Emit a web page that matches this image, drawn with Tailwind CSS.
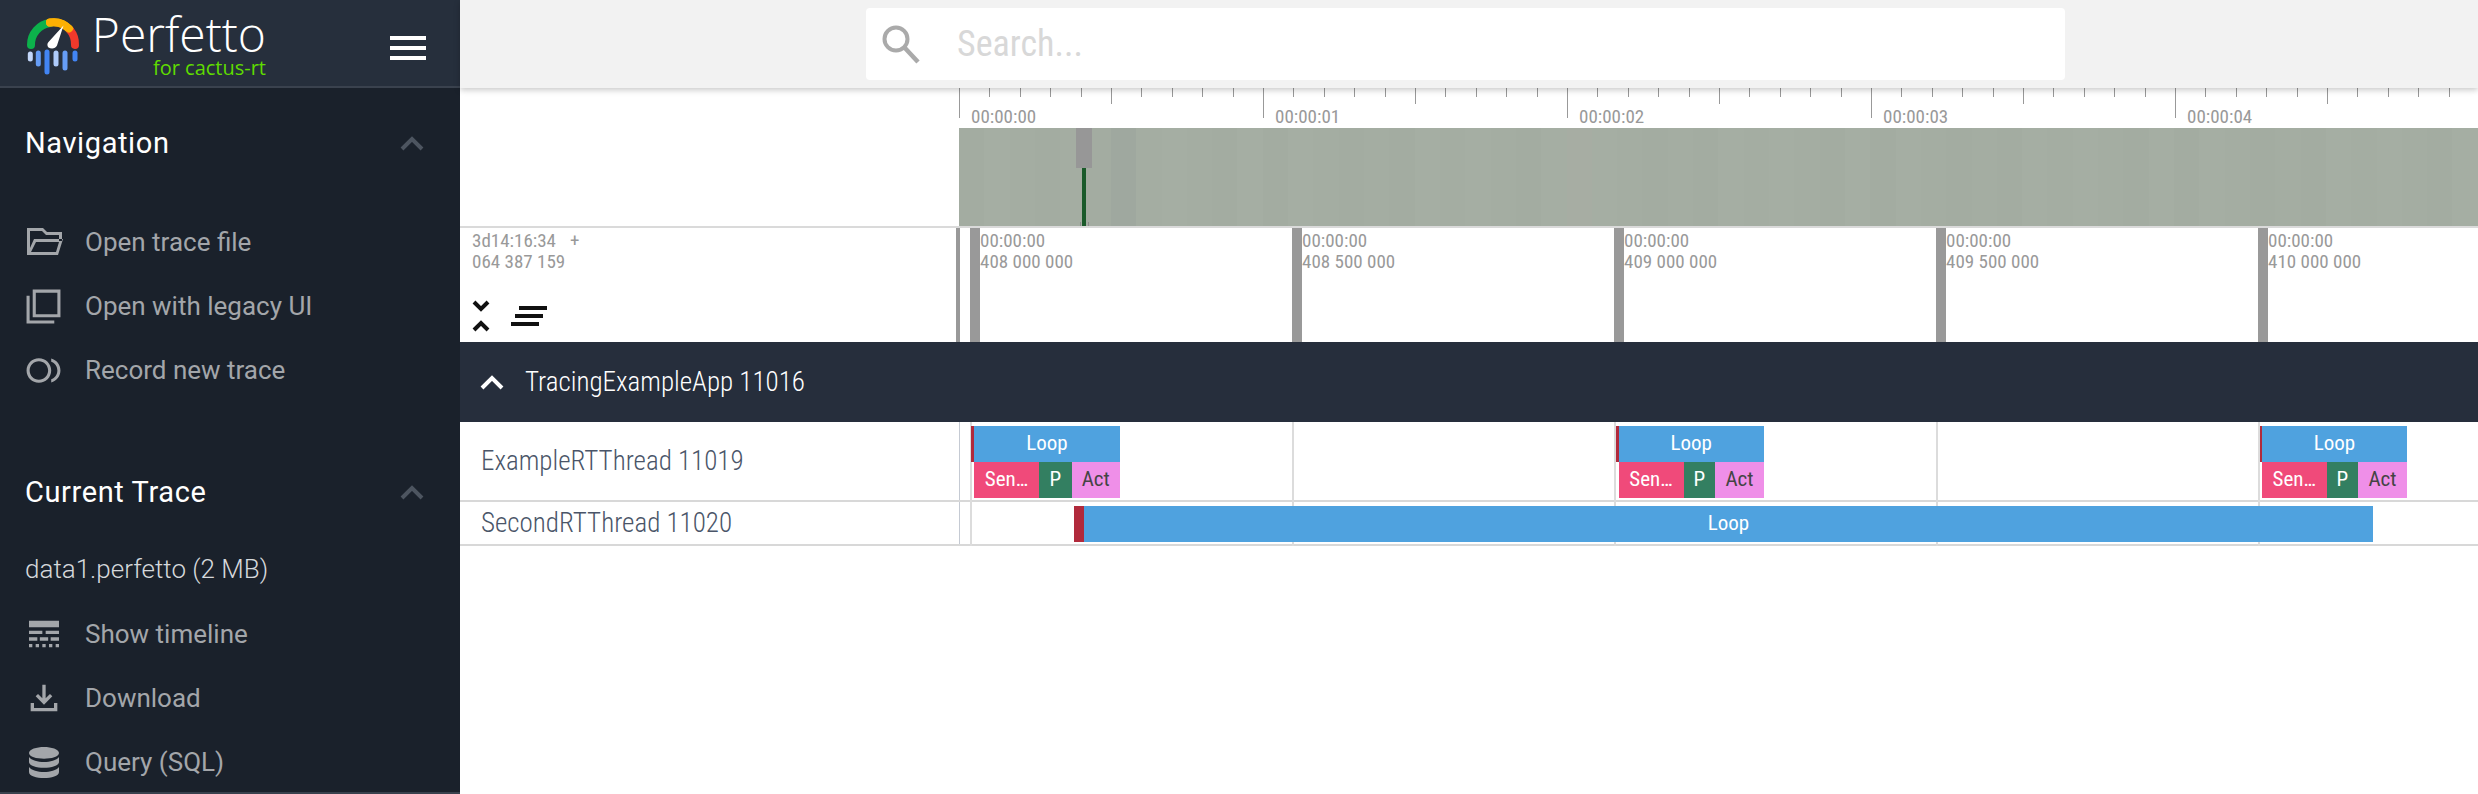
<!DOCTYPE html>
<html lang="en">
<head>
  <meta charset="UTF-8" />
  <meta name="viewport" content="width=device-width, initial-scale=1.0" />
  <title>Perfetto UI</title>
  <script src="https://cdn.jsdelivr.net/npm/@tailwindcss/browser@4"></script>
</head>
<body class="flex h-[794px] w-[2478px] overflow-hidden bg-white font-['Roboto',sans-serif]">

  <!-- Sidebar -->
  <aside class="flex h-full w-[460px] flex-none flex-col overflow-hidden border-b-2 border-[#39414d] bg-[#1a212b]">
    <div class="flex h-[88px] flex-none items-start justify-between border-b-2 border-[#3a424e] bg-[#262f3c] pr-[34px]">
      <div class="flex">
        <svg class="mt-[16px] ml-[26px] h-[62px] w-[56px] flex-none" viewBox="0 0 56 62" fill="none">
          <g stroke-width="8" stroke-linecap="round">
            <path d="M5 29A22 22 0 0 1 24 7" stroke="#0cb14b" />
            <path d="M24 6.5A22 22 0 0 1 44 14" stroke="#fbb003" />
            <path d="M44 14A22 22 0 0 1 49 29" stroke="#f1392b" />
            <path d="M24 6.5A22 22 0 0 1 43 12.5" stroke="#fbb003" />
          </g>
          <path d="M37.5 9.5L31 29.5C29.5 33 25 33 22.5 31.5C21 30 21 27.5 22.5 26Z" fill="#fff" />
          <g stroke-width="5" stroke-linecap="round">
            <path d="M4.3 38V43" stroke="#c3d7fa" />
            <path d="M12.3 37V48" stroke="#669df6" />
            <path d="M21 36V56" stroke="#4285f4" />
            <path d="M30 37V48" stroke="#aecbfa" />
            <path d="M39 37V52" stroke="#669df6" />
            <path d="M49 37V43" stroke="#4285f4" />
          </g>
        </svg>
        <div class="ml-[14px] flex w-[170px] flex-col items-end font-['Open_Sans',sans-serif]">
          <span class="mt-[4px] h-[52px] text-[48px] leading-[60px] font-light text-white">Perfetto</span>
          <span class="mt-[0px] text-[20px] leading-[24px] text-[#5fdc00]">for cactus-rt</span>
        </div>
      </div>
      <button class="mt-[36px] flex h-[24px] w-[36px] flex-col justify-between">
        <span class="h-[4px] w-full bg-white"></span>
        <span class="h-[4px] w-full bg-white"></span>
        <span class="h-[4px] w-full bg-white"></span>
      </button>
    </div>

    <section class="pt-[36px]">
      <div class="flex h-[38px] items-center justify-between pr-[36px] pl-[25px]">
        <h2 class="text-[29px] leading-[38px] tracking-[0.6px] text-white">Navigation</h2>
        <svg class="h-[16px] w-[24px]" viewBox="0 0 24 16" fill="none"><path d="M2 14L12 4L22 14" stroke="#4d5560" stroke-width="4" /></svg>
      </div>
      <ul class="mt-[48px] flex flex-col text-[26px] text-[#a3a6aa]">
        <li class="flex h-[64px] items-center">
          <svg class="ml-[27px] h-[28px] w-[36px]" viewBox="0 0 36 28" fill="currentColor"><path fill-rule="evenodd" d="M0 0H16L20 4H35V13H32V7H19L15 3H3V20L7 11H36L31 27H0ZM9 14L4 24H29L32 14Z" /></svg>
          <span class="ml-[22px]">Open trace file</span>
        </li>
        <li class="flex h-[64px] items-center">
          <svg class="ml-[25px] h-[37px] w-[37px]" viewBox="0 0 24 24" fill="currentColor"><path d="M3 5H1v18h18v-2H3V5zm20-4H5v18h18V1zm-2 16H7V3h14v14z" /></svg>
          <span class="ml-[23px]">Open with legacy UI</span>
        </li>
        <li class="flex h-[64px] items-center">
          <svg class="ml-[25px] h-[37px] w-[37px]" viewBox="0 0 24 24" fill="currentColor"><path d="M17 4.26v2.09c2.33.82 4 3.04 4 5.65s-1.67 4.83-4 5.65v2.09c3.45-.89 6-4.01 6-7.74s-2.55-6.85-6-7.74zM9 4c-4.42 0-8 3.58-8 8s3.58 8 8 8 8-3.58 8-8-3.58-8-8-8zm0 14c-3.31 0-6-2.69-6-6s2.69-6 6-6 6 2.69 6 6-2.69 6-6 6z" /></svg>
          <span class="ml-[23px]">Record new trace</span>
        </li>
      </ul>
    </section>

    <section class="pt-[71px]">
      <div class="flex h-[38px] items-center justify-between pr-[36px] pl-[25px]">
        <h2 class="text-[29px] leading-[38px] tracking-[0.6px] text-white">Current Trace</h2>
        <svg class="h-[16px] w-[24px]" viewBox="0 0 24 16" fill="none"><path d="M2 14L12 4L22 14" stroke="#4d5560" stroke-width="4" /></svg>
      </div>
      <p class="mt-[40px] pl-[25px] text-[26px] leading-[36px] font-light text-[#d5d8db]">data1.perfetto (2 MB)</p>
      <ul class="mt-[15px] flex flex-col text-[26px] text-[#a3a6aa]">
        <li class="flex h-[64px] items-center">
          <svg class="ml-[24px] h-[40px] w-[40px]" viewBox="0 0 24 24" fill="currentColor"><path d="M3 16h5v-2H3v2zm6.5 0h5v-2h-5v2zm6.5 0h5v-2h-5v2zM3 20h2v-2H3v2zm4 0h2v-2H7v2zm4 0h2v-2h-2v2zm4 0h2v-2h-2v2zm4 0h2v-2h-2v2zM3 12h8v-2H3v2zm10 0h8v-2h-8v2zM3 4v4h18V4H3z" /></svg>
          <span class="ml-[21px]">Show timeline</span>
        </li>
        <li class="flex h-[64px] items-center">
          <svg class="ml-[24px] h-[40px] w-[40px]" viewBox="0 0 24 24" fill="currentColor"><path d="M18 15v3H6v-3H4v5h16v-5h-2zm-1-4l-1.41-1.41L13 12.17V4h-2v8.17L8.41 9.59 7 11l5 5 5-5z" /></svg>
          <span class="ml-[21px]">Download</span>
        </li>
        <li class="flex h-[64px] items-center">
          <svg class="ml-[24px] h-[40px] w-[40px]" viewBox="0 0 24 24" fill="currentColor"><path d="M12 3C7.6 3 3 4.300 3 6.600S7.600 10 12 10s9-1.100 9-3.400S16.400 3 12 3zM3 9v3c0 2.300 4.600 3.500 9 3.500s9-1.200 9-3.500V9c-1.500 2-5.300 3-9 3S4.500 11 3 9zM3 15v3c0 2.400 4.600 3.600 9 3.600s9-1.200 9-3.600v-3c-1.500 2-5.300 3-9 3s-7.500-1-9-3z" /></svg>
          <span class="ml-[21px]">Query (SQL)</span>
        </li>
      </ul>
    </section>
  </aside>

  <main class="flex h-full min-w-0 flex-1 flex-col font-['Roboto_Condensed',Roboto,sans-serif] font-stretch-condensed">
    <!-- Search bar -->
    <header class="relative z-10 flex h-[88px] flex-none items-center justify-center bg-[#f2f2f2] pr-[3px] shadow-[0_2px_6px_rgba(0,0,0,0.22)]">
      <div class="ml-[-4px] flex h-[72px] w-[1199px] items-center rounded-[4px] bg-white">
        <svg class="ml-[15px] h-[40px] w-[40px]" viewBox="0 0 40 40" fill="none" stroke="#aaaaaa"><circle cx="15" cy="15" r="11.500" stroke-width="4" /><path d="M23 23L37 38" stroke-width="4.500" /></svg>
        <span class="ml-[36px] text-[36px] text-[#d8d8d8]">Search...</span>
      </div>
    </header>

    <!-- Overview -->
    <div class="flex h-[140px] flex-none border-b-2 border-[#dadada]">
      <div class="w-[499px] flex-none"></div>
      <div class="relative flex-1">
        <div id="ruler" class="relative h-[40px]"></div>
        <div id="overview" class="relative flex h-[98px] bg-[#a5aea3]">
          <div class="absolute top-0 left-[117px] h-[40px] w-[16px] bg-[#979797]"></div>
          <div class="absolute top-[40px] bottom-0 left-[123px] w-[4px] bg-[#1a5a2a]"></div>
          <div class="absolute top-[94px] bottom-0 left-[121px] w-[1px] bg-[#8a8a8a]"></div>
          <div class="absolute top-[94px] bottom-0 left-[129px] w-[1px] bg-[#8a8a8a]"></div>
        </div>
      </div>
    </div>

    <!-- Time scale -->
    <div class="flex h-[114px] flex-none">
      <div class="flex w-[496px] flex-none flex-col justify-between pt-[3px] pb-[9px] pl-[12px] text-[19px] leading-[20.500px] text-[#999999]">
        <div>
          <div class="flex gap-[14px]"><span>3d14:16:34</span><span>+</span></div>
          <div>064 387 159</div>
        </div>
        <div class="flex items-center gap-[21px]">
          <svg class="h-[34px] w-[18px]" viewBox="0 0 18 34" fill="none" stroke="#111111" stroke-width="4"><path d="M2 3L9 10L16 3" /><path d="M2 31L9 24L16 31" /></svg>
          <div class="flex w-[36px] flex-col gap-[4px]">
            <span class="ml-[8px] h-[4px] w-[28px] bg-[#111111]"></span>
            <span class="ml-[4px] h-[4px] w-[28px] bg-[#111111]"></span>
            <span class="h-[4px] w-[28px] bg-[#111111]"></span>
          </div>
        </div>
      </div>
      <div class="w-[4px] flex-none bg-[#999999]"></div>
      <div id="scale" class="relative flex-1"></div>
    </div>

    <!-- Process header -->
    <div class="flex h-[80px] flex-none items-center bg-[#262e3c] pl-[20px] text-white">
      <svg class="h-[16px] w-[24px]" viewBox="0 0 24 16" fill="none"><path d="M2 14L12 4L22 14" stroke="#ffffff" stroke-width="4" /></svg>
      <span class="ml-[21px] text-[27px] font-light">TracingExampleApp 11016</span>
    </div>

    <!-- Tracks -->
    <div class="relative flex-none">
      <div class="flex h-[80px] border-b-2 border-[#d8d8d8]">
        <div class="flex w-[499px] flex-none items-center pl-[21px] text-[27px] font-light text-[#4a5568]">ExampleRTThread 11019</div>
        <div id="track1" class="relative flex-1 border-l border-[#c5cad3]"></div>
      </div>
      <div class="flex h-[44px] border-b-2 border-[#d8d8d8]">
        <div class="flex w-[499px] flex-none items-center pl-[21px] text-[27px] font-light text-[#4a5568]">SecondRTThread 11020</div>
        <div id="track2" class="relative flex-1 border-l border-[#c5cad3]"></div>
      </div>
    </div>
  </main>

  <script>
    const RULER_ORIGIN = 959;
    const rulerLabels = ["00:00:00", "00:00:01", "00:00:02", "00:00:03", "00:00:04"];
    const scaleTicks = [
      { x: 970, label: "408 000 000" },
      { x: 1292, label: "408 500 000" },
      { x: 1614, label: "409 000 000" },
      { x: 1936, label: "409 500 000" },
      { x: 2258, label: "410 000 000" }
    ];

    // top ruler, 5 majors + 10 subdivisions each
    const ruler = document.getElementById("ruler");
    for (let i = 0; i < 50; i++) {
      const x = Math.round(i * 30.4);
      const tick = document.createElement("div");
      const major = i % 10 === 0;
      tick.className = major
        ? "absolute top-0 h-[30px] w-[1px] bg-[#999999]"
        : i % 5 === 0
          ? "absolute top-0 h-[16px] w-[1px] bg-[#999999]"
          : "absolute top-0 h-[9px] w-[1px] bg-[#999999]";
      tick.style.left = x + "px";
      ruler.appendChild(tick);
      if (major) {
        const label = document.createElement("span");
        label.className = "absolute top-[18px] text-[19px] leading-[22px] text-[#999999]";
        label.style.left = x + 12 + "px";
        label.textContent = rulerLabels[i / 10];
        ruler.appendChild(label);
      }
    }

    // overview stripes
    const overview = document.getElementById("overview");
    const shades = ["#a5aea3", "#a7b0a5", "#a3aca1", "#a6afa4", "#a4ada2", "#a8b0a6"];
    for (let i = 0; i < 60; i++) {
      const stripe = document.createElement("div");
      stripe.className = "h-full flex-1";
      let color = shades[(i * 7 + (i % 4)) % shades.length];
      if (i === 35) color = "#a7ada3";
      if (i === 53) color = "#9fa89f";
      stripe.style.background = color;
      overview.prepend(stripe);
    }

    // time scale ticks and labels
    const scale = document.getElementById("scale");
    scaleTicks.forEach(t => {
      const tick = document.createElement("div");
      tick.className = "absolute top-0 bottom-0 w-[2px] bg-[#999999] pl-[10px] pt-[3px] text-[19px] leading-[20.500px] text-[#999999] whitespace-nowrap";
      tick.style.left = t.x - 960 + "px";
      tick.innerHTML = `<div class="ml-[0px]">00:00:00</div><div>${t.label}</div>`;
      scale.appendChild(tick);
    });

    // track grid lines
    const trackOffsets = scaleTicks.map(t => t.x - 960);
    ["track1", "track2"].forEach(id => {
      const track = document.getElementById(id);
      trackOffsets.forEach(x => {
        const line = document.createElement("div");
        line.className = "absolute top-0 -bottom-[2px] w-[2px] bg-[#dcdcdc]";
        line.style.left = x + "px";
        track.appendChild(line);
      });
    });

    function addSlice(track, left, right, top, height, bg, text, textClass) {
      const el = document.createElement("div");
      el.className = "absolute flex items-center justify-center overflow-hidden text-[21px] " + textClass;
      el.style.cssText = `left:${left - 960}px;width:${right - left}px;top:${top}px;height:${height}px;background:${bg}`;
      el.textContent = text;
      document.getElementById(track).appendChild(el);
    }

    // [red start, loop start, sen end, p end, loop end]
    [
      [971, 974, 1039, 1071.5, 1120],
      [1616, 1618.5, 1683.5, 1715, 1764],
      [2259.5, 2262, 2326.5, 2358, 2407]
    ].forEach(([r, s, a, b, e]) => {
      addSlice("track1", r, s, 4, 36, "#b12a3c", "", "");
      addSlice("track1", s, e, 4, 36, "#4fa2df", "Loop", "text-white");
      addSlice("track1", s, a, 40, 36, "#f04a7a", "Sen…", "text-white");
      addSlice("track1", a, b, 40, 36, "#337f61", "P", "text-white");
      addSlice("track1", b, e, 40, 36, "#ef8fe8", "Act", "text-[#444444]");
    });
    addSlice("track2", 1074, 1084, 4, 36, "#b12a3c", "", "");
    addSlice("track2", 1084, 2373, 4, 36, "#4fa2df", "Loop", "text-white");
  </script>
</body>
</html>
